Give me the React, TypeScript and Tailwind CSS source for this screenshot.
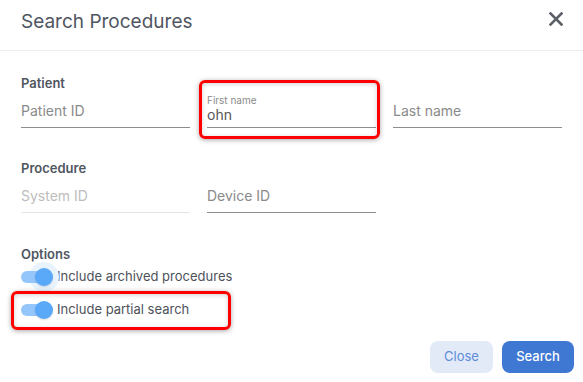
import { useState } from "react";

type FieldProps = {
    label: string;
    value?: string;
    disabled?: boolean;
};

function Field({ label, value, disabled }: FieldProps) {
    const underline = disabled ? "border-[#e5e5e5]" : "border-[#8d8d8d]";

    if (value) {
        return (
            <div className={`h-[37px] border-b ${underline} flex flex-col justify-end pb-[3px]`}>
                <span className="text-[10px] leading-[11px] text-[#8a8a8a]">{label}</span>
                <span className="text-[14px] leading-[18px] text-[#555]">{value}</span>
            </div>
        );
    }

    return (
        <div className={`h-[37px] border-b ${underline} flex flex-col justify-end pb-[6px]`}>
            <span className={`text-[14px] leading-5 ${disabled ? "text-[#bdbdbd]" : "text-[#8a8a8a]"}`}>{label}</span>
        </div>
    );
}

function Toggle({ checked, halo }: { checked: boolean; halo?: boolean }) {
    return (
        <span className="relative inline-flex items-center w-[36px] h-[26px] shrink-0">
            {halo && (
                <span className="absolute left-[8px] top-[-2px] w-[30px] h-[30px] rounded-full bg-[#e9f3fe]" />
            )}
            <span className={`relative w-[30px] h-[12px] rounded-full ${checked ? "bg-[#95c6fb]" : "bg-gray-300"}`} />
            <span className="absolute left-[14px] top-[4px] w-[18px] h-[18px] rounded-full bg-[#5aa8f8] shadow-[0_1px_2px_rgba(0,0,0,0.15)]" />
        </span>
    );
}

function SectionLabel({ children }: { children: string }) {
    return <div className="text-[13px] leading-4 font-semibold text-[#50565f]">{children}</div>;
}

export default function App() {
    const [archived] = useState(true);
    const [partial] = useState(true);

    return (
        <div className="w-[583px] h-[382px] bg-white overflow-hidden font-['Inter',sans-serif]">
            {/* Header */}
            <div className="h-[51px] border-b border-[#ececec] flex items-start justify-between pl-[21px] pr-[20px] pt-[10px]">
                <h1 className="text-[19px] leading-6 text-[#4f5661]">Search Procedures</h1>
                <svg width="14" height="14" viewBox="0 0 14 14" className="mt-[2px]">
                    <path d="M1.5 1.5 L12.5 12.5 M12.5 1.5 L1.5 12.5" stroke="#5b6068" strokeWidth="2.6" strokeLinecap="square" />
                </svg>
            </div>

            <div className="px-[21px] pt-[24px]">
                {/* Patient */}
                <SectionLabel>Patient</SectionLabel>
                <div className="grid grid-cols-3 gap-x-[17px]">
                    <Field label="Patient ID" />
                    <div className="relative">
                        <Field label="First name" value="ohn" />
                        <div className="absolute left-[-8px] right-[-4px] top-[-11px] bottom-[-11px] border-[3px] border-[#ff0000] rounded-[6px] shadow-[0_1px_5px_rgba(0,0,0,0.35),inset_0_1px_5px_rgba(0,0,0,0.18)]" />
                    </div>
                    <Field label="Last name" />
                </div>

                {/* Procedure */}
                <div className="mt-[32px]">
                    <SectionLabel>Procedure</SectionLabel>
                    <div className="grid grid-cols-3 gap-x-[17px]">
                        <Field label="System ID" disabled />
                        <Field label="Device ID" />
                    </div>
                </div>

                {/* Options */}
                <div className="mt-[33px]">
                    <SectionLabel>Options</SectionLabel>
                    <div className="flex flex-col gap-[7px] mt-[2px]">
                        <label className="flex items-center h-[26px] text-[13px] text-[#4d525a]">
                            <Toggle checked={archived} halo />
                            <span>Include archived procedures</span>
                        </label>
                        <div className="relative w-fit">
                            <label className="flex items-center h-[26px] text-[13px] text-[#4d525a]">
                                <Toggle checked={partial} />
                                <span>Include partial search</span>
                            </label>
                            <div className="absolute left-[-10px] w-[220px] top-[-6px] bottom-[-7px] border-[3px] border-[#ff0000] rounded-[6px] shadow-[0_1px_5px_rgba(0,0,0,0.35),inset_0_1px_5px_rgba(0,0,0,0.18)]" />
                        </div>
                    </div>
                </div>
            </div>

            {/* Footer */}
            <div className="flex justify-end gap-[9px] pr-[9px] mt-[18px]">
                <button className="h-[32px] w-[63px] rounded-[8px] bg-[#e2eaf8] text-[13px] text-[#5d8cd8]">Close</button>
                <button className="h-[32px] w-[72px] rounded-[8px] bg-[#3e78d3] text-[13px] font-medium text-white">Search</button>
            </div>
        </div>
    );
}
